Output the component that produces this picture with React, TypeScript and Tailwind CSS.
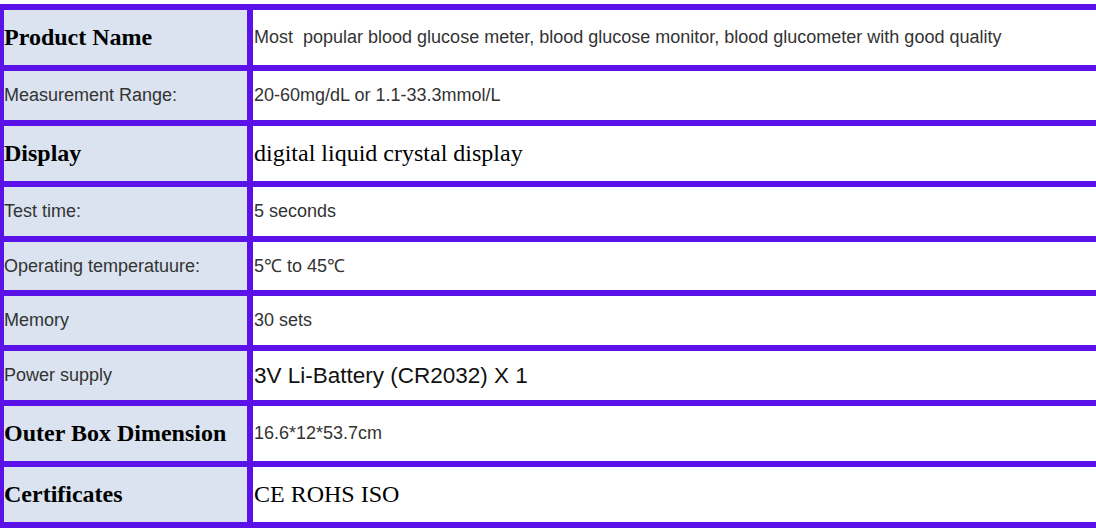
const serif = "font-['Liberation_Serif','Times_New_Roman',serif]";
const sans = "font-['Liberation_Sans',Arial,sans-serif]";

type Row = {
  label: string;
  labelBig?: boolean;
  value: string;
  valueKind: 'sans' | 'serif' | 'sansBig';
  h: string;
};

const rows: Row[] = [
  { label: 'Product Name', labelBig: true, value: 'Most\u00a0 popular blood glucose meter, blood glucose monitor, blood glucometer with good quality', valueKind: 'sans', h: 'h-[55px]' },
  { label: 'Measurement Range:', value: '20-60mg/dL or 1.1-33.3mmol/L', valueKind: 'sans', h: 'h-[49px]' },
  { label: 'Display', labelBig: true, value: 'digital liquid crystal display', valueKind: 'serif', h: 'h-[55px]' },
  { label: 'Test time:', value: '5 seconds', valueKind: 'sans', h: 'h-[49px]' },
  { label: 'Operating temperatuure:', value: '5℃ to 45℃', valueKind: 'sans', h: 'h-[48px]' },
  { label: 'Memory', value: '30 sets', valueKind: 'sans', h: 'h-[49px]' },
  { label: 'Power supply', value: '3V Li-Battery (CR2032) X 1', valueKind: 'sansBig', h: 'h-[49px]' },
  { label: 'Outer Box Dimension', labelBig: true, value: '16.6*12*53.7cm', valueKind: 'sans', h: 'h-[55px]' },
  { label: 'Certificates', labelBig: true, value: 'CE ROHS ISO', valueKind: 'serif', h: 'h-[55px]' },
];

function valueClass(kind: Row['valueKind']) {
  if (kind === 'serif') return `${serif} text-[24px] leading-[27px] text-black`;
  if (kind === 'sansBig') return `${sans} text-[22.5px] text-[#111]`;
  return `${sans} text-[18px] text-[#333]`;
}

export default function App() {
  return (
    <div className="h-[528px] w-[1096px] overflow-hidden bg-white pt-[4px]">
      <div className="grid w-[1120px] grid-cols-[243px_1fr] gap-[6px] bg-[#5a12e9] py-[6px] pl-[4px] pr-[6px]">
        {rows.map((r) => (
          <div key={r.label} className="contents">
            <div className={`flex items-center whitespace-nowrap bg-[#dae3ef] ${r.h}`}>
              {r.labelBig ? (
                <span className={`${serif} text-[24px] leading-[27px] font-bold text-black`}>{r.label}</span>
              ) : (
                <span className={`${sans} text-[18px] text-[#333]`}>{r.label}</span>
              )}
            </div>
            <div className={`flex items-center whitespace-nowrap bg-white pl-px ${r.h}`}>
              <span className={valueClass(r.valueKind)}>{r.value}</span>
            </div>
          </div>
        ))}
      </div>
    </div>
  );
}
